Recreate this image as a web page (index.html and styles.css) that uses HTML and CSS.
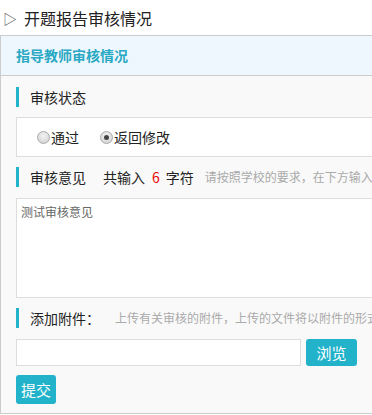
FILE: index.html
```html
<!DOCTYPE html>
<html lang="zh">
<head>
<meta charset="utf-8">
<link rel="stylesheet" href="styles.css">
</head>
<body>
<div class="title"><span class="tri">▷</span><span class="title-text">开题报告审核情况</span></div>
<div class="panel">
  <div class="panel-head">指导教师审核情况</div>
  <div class="panel-body">
    <div class="label">审核状态</div>
    <div class="radio-box">
      <label class="radio"><span class="dot"></span>通过</label>
      <label class="radio"><span class="dot checked"></span>返回修改</label>
    </div>
    <div class="label">审核意见<span class="count">共输入<em>6</em>字符</span><span class="hint">请按照学校的要求，在下方输入审核意见</span></div>
    <div class="textarea">测试审核意见</div>
    <div class="label">添加附件：<span class="hint hint2">上传有关审核的附件，上传的文件将以附件的形式保存</span></div>
    <div class="file-row">
      <div class="file-input"></div>
      <button class="btn">浏览</button>
    </div>
    <button class="btn submit">提交</button>
  </div>
</div>
</body>
</html>
```
FILE: styles.css
```css
html, body {
  margin: 0;
  padding: 0;
  background: #fff;
  overflow: hidden;
  font-family: "Noto Sans CJK SC", "Microsoft YaHei", sans-serif;
}
.title {
  height: 35px;
  display: flex;
  align-items: center;
  padding-left: 3px;
  color: #222;
  font-size: 16px;
}
.tri {
  font-size: 14px;
  color: #555;
  width: 21px;
}
.panel {
  width: 460px;
  border: 1px solid #ccc;
  border-right: none;
}
.panel-head {
  height: 39px;
  line-height: 39px;
  background: #eef7fd;
  border-bottom: 1px solid #ccc;
  padding-left: 15px;
  color: #2aa9c4;
  font-weight: bold;
  font-size: 14px;
}
.panel-body {
  background: #f9f9f9;
  padding: 11px 15px 9px 15px;
}
.label {
  border-left: 3px solid #22b3cb;
  padding-left: 11px;
  height: 20px;
  line-height: 20px;
  font-size: 14px;
  color: #222;
  white-space: nowrap;
  display: flex;
  align-items: center;
}
.count {
  margin-left: 17px;
}
.count em {
  font-style: normal;
  color: #e00;
  margin: 0 6px 0 7px;
}
.hint {
  margin-left: 11px;
  font-size: 12px;
  color: #aaa;
}
.hint2 {
  margin-left: 15px;
}
.radio-box {
  margin: 10px 0;
  height: 38px;
  background: #fff;
  border: 1px solid #ddd;
  border-right: none;
  display: flex;
  align-items: center;
  padding-left: 20px;
  font-size: 14px;
  color: #222;
}
.radio {
  display: flex;
  align-items: center;
  margin-right: 21px;
}
.dot {
  width: 11px;
  height: 11px;
  border-radius: 50%;
  border: 1px solid #aaa;
  background: radial-gradient(circle at 50% 35%, #f2f2f2, #cfcfcf);
  margin-right: 1px;
  position: relative;
}
.dot.checked::after {
  content: "";
  position: absolute;
  left: 3px;
  top: 3px;
  width: 5px;
  height: 5px;
  border-radius: 50%;
  background: #444;
}
.textarea {
  margin: 11px 0 10px;
  height: 88px;
  background: #fff;
  border: 1px solid #ddd;
  border-right: none;
  padding: 5px 4px;
  font-size: 12px;
  color: #666;
  line-height: 16px;
}
.file-row {
  display: flex;
  margin-top: 11px;
}
.file-input {
  width: 283px;
  height: 25px;
  background: #fff;
  border: 1px solid #ddd;
}
.btn {
  margin: 0 0 0 5px;
  width: 51px;
  height: 27px;
  border: none;
  border-radius: 3px;
  background: #22b3cb;
  color: #fff;
  font-family: "Noto Sans CJK SC", sans-serif;
  font-size: 15px;
  padding: 0;
  display: block;
}
.submit {
  margin: 9px 0 0 0;
  width: 40px;
  height: 29px;
  font-size: 15px;
}
```
